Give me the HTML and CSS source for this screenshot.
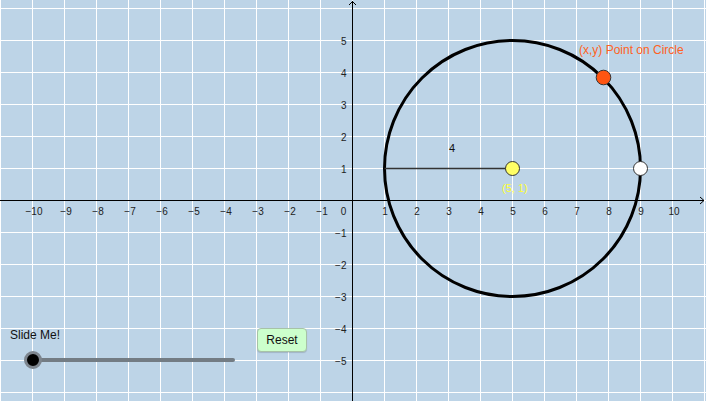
FILE: index.html
```html
<!DOCTYPE html>
<html>
<head>
<meta charset="utf-8">
<link rel="stylesheet" href="styles.css">
</head>
<body>
<div class="applet">
  <svg class="graph" width="706" height="401" viewBox="0 0 706 401" xmlns="http://www.w3.org/2000/svg">
    <defs>
      <pattern id="grid" x="0" y="8" width="32" height="32" patternUnits="userSpaceOnUse">
        <rect x="0" y="0" width="1" height="32" fill="#ffffff"/>
        <rect x="0" y="0" width="32" height="1" fill="#ffffff"/>
      </pattern>
    </defs>
    <rect x="0" y="0" width="706" height="401" fill="#bdd4e7"/>
    <rect x="0" y="0" width="706" height="401" fill="url(#grid)"/>

    <!-- axes -->
    <g stroke="#000" stroke-width="1" fill="none">
      <line x1="0" y1="200.5" x2="704" y2="200.5"/>
      <polyline points="700,197 704,200.5 700,204"/>
      <line x1="352.5" y1="1" x2="352.5" y2="401"/>
      <polyline points="349,5 352.5,1.5 356,5"/>
    </g>

    <g class="tick xt">
      <text x="34" y="215">−10</text>
      <text x="66" y="215">−9</text>
      <text x="98" y="215">−8</text>
      <text x="130" y="215">−7</text>
      <text x="162" y="215">−6</text>
      <text x="194" y="215">−5</text>
      <text x="226" y="215">−4</text>
      <text x="258" y="215">−3</text>
      <text x="290" y="215">−2</text>
      <text x="322" y="215">−1</text>
      <text x="343.5" y="215">0</text>
      <text x="385" y="215">1</text>
      <text x="417" y="215">2</text>
      <text x="449" y="215">3</text>
      <text x="481" y="215">4</text>
      <text x="513" y="215">5</text>
      <text x="545" y="215">6</text>
      <text x="577" y="215">7</text>
      <text x="609" y="215">8</text>
      <text x="641" y="215">9</text>
      <text x="674" y="215">10</text>
    </g>
    <g class="tick yt">
      <text x="346.5" y="44.5">5</text>
      <text x="346.5" y="76.5">4</text>
      <text x="346.5" y="108.5">3</text>
      <text x="346.5" y="140.5">2</text>
      <text x="346.5" y="172.5">1</text>
      <text x="346.5" y="236.5">−1</text>
      <text x="346.5" y="268.5">−2</text>
      <text x="346.5" y="300.5">−3</text>
      <text x="346.5" y="332.5">−4</text>
      <text x="346.5" y="364.5">−5</text>
    </g>

    <!-- circle and radius -->
    <circle cx="512.5" cy="168.5" r="128" fill="none" stroke="#000" stroke-width="3"/>
    <line x1="384.5" y1="168.5" x2="512.5" y2="168.5" stroke="#333" stroke-width="1.5"/>
    <text class="lbl" x="452" y="152" text-anchor="middle">4</text>

    <!-- points -->
    <circle cx="512.5" cy="168.5" r="7" fill="#ffff66" stroke="#333" stroke-width="1"/>
    <circle cx="640.5" cy="168.5" r="7" fill="#ffffff" stroke="#333" stroke-width="1"/>
    <circle cx="603.5" cy="77.5" r="7.3" fill="#ff5511" stroke="#333" stroke-width="1"/>

    <text class="lbl yellow" x="502" y="192">(5, 1)</text>
    <text class="lbl orange" x="579" y="54">(x,y) Point on Circle</text>
  </svg>

  <div class="slider">
    <div class="slider-caption">Slide Me!</div>
    <div class="slider-track">
      <div class="slider-knob"></div>
    </div>
  </div>

  <button class="reset">Reset</button>
</div>
</body>
</html>
```
FILE: styles.css
```css
html, body {
  margin: 0;
  padding: 0;
  overflow: hidden;
  background: #bdd4e7;
}
.applet {
  position: relative;
  width: 706px;
  height: 401px;
  font-family: "Liberation Sans", Arial, sans-serif;
}
.graph {
  display: block;
}
.tick {
  font-family: "Liberation Sans", Arial, sans-serif;
  font-size: 10px;
  fill: #222;
}
.xt text {
  text-anchor: middle;
}
.yt text {
  text-anchor: end;
}
.lbl {
  font-family: "Liberation Sans", Arial, sans-serif;
  font-size: 11px;
  fill: #111;
}
.yellow {
  fill: #ffff33;
}
.orange {
  font-size: 12px;
  fill: #ff6222;
}
.slider {
  position: absolute;
  left: 10px;
  top: 328px;
  width: 240px;
}
.slider-caption {
  font-size: 12px;
  line-height: 14px;
  color: #111;
}
.slider-track {
  position: relative;
  margin-top: 16px;
  margin-left: 23px;
  width: 202px;
  height: 4px;
  border-radius: 2px;
  background: #737c84;
}
.slider-knob {
  position: absolute;
  left: -9px;
  top: -7px;
  width: 12px;
  height: 12px;
  border-radius: 50%;
  background: #000;
  border: 3px solid #7d858e;
}
.reset {
  position: absolute;
  left: 257px;
  top: 328px;
  width: 50px;
  height: 24px;
  padding: 0;
  margin: 0;
  box-sizing: border-box;
  background: #ccffcc;
  border: 1px solid #a7c2a7;
  border-radius: 4px;
  box-shadow: 0 1px 1px rgba(0,0,0,0.15);
  font-family: "Liberation Sans", Arial, sans-serif;
  font-size: 12px;
  color: #111;
}
```
